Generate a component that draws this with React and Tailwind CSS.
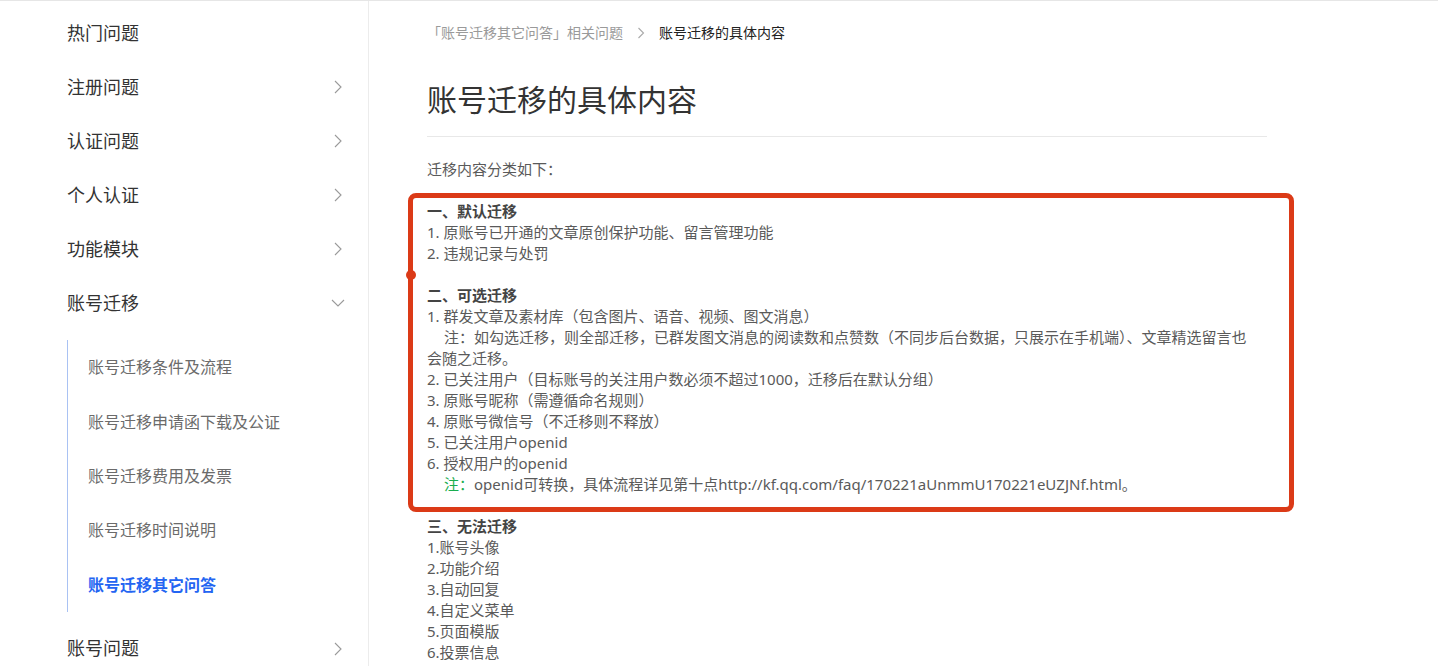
import React from "react";

const FONT = { fontFamily: '"Noto Sans", "Noto Sans CJK SC", sans-serif' };

function ChevronRight() {
  return (
    <svg width="14" height="14" viewBox="0 0 14 14" fill="none">
      <polyline points="4,1 10,7 4,13" stroke="#9a9a9a" strokeWidth="1.1" />
    </svg>
  );
}

function ChevronDown() {
  return (
    <svg width="14" height="14" viewBox="0 0 14 14" fill="none">
      <polyline points="1,4 7,10 13,4" stroke="#9a9a9a" strokeWidth="1.1" />
    </svg>
  );
}

function NavItem({ label, icon }) {
  return (
    <div className="h-[54px] flex items-center justify-between pl-[67px] pr-[23px] text-[18px] text-[#333]">
      <span>{label}</span>
      {icon === "right" && <ChevronRight />}
      {icon === "down" && <ChevronDown />}
    </div>
  );
}

const subItems = [
  "账号迁移条件及流程",
  "账号迁移申请函下载及公证",
  "账号迁移费用及发票",
  "账号迁移时间说明",
  "账号迁移其它问答",
];

function Line({ children, className = "" }) {
  return <div className={"leading-[21px] min-h-[21px] " + className}>{children}</div>;
}

function Indent() {
  return <span className="inline-block w-[17px]" />;
}

export default function App() {
  return (
    <div
      className="w-[1438px] h-[666px] overflow-hidden bg-white border-t border-[#e6e6e6] flex"
      style={FONT}
    >
      <aside className="w-[369px] shrink-0 border-r border-[#ececec] pt-[5px]">
        <NavItem label="热门问题" />
        <NavItem label="注册问题" icon="right" />
        <NavItem label="认证问题" icon="right" />
        <NavItem label="个人认证" icon="right" />
        <NavItem label="功能模块" icon="right" />
        <NavItem label="账号迁移" icon="down" />
        <div className="ml-[67px] mt-[10px] mb-[10px] border-l border-[#a9c2f3]">
          {subItems.map((s, i) => (
            <div
              key={s}
              className={
                "h-[54.4px] flex items-center pl-[20px] text-[16px] " +
                (i === subItems.length - 1 ? "text-[#2465f2] font-bold" : "text-[#6b6b6b]")
              }
            >
              {s}
            </div>
          ))}
        </div>
        <NavItem label="账号问题" icon="right" />
      </aside>

      <main className="flex-1 pl-[58px] pt-[21px]">
        <div className="w-[840px]">
          <div className="flex items-center text-[14px] leading-[21px]">
            <span className="text-[#9a9a9a]">「账号迁移其它问答」相关问题</span>
            <span className="mx-[14px] flex items-center">
              <svg width="8" height="12" viewBox="0 0 8 12" fill="none">
                <polyline points="1.5,1 6.5,6 1.5,11" stroke="#aaa" strokeWidth="1.1" />
              </svg>
            </span>
            <span className="text-[#222]">账号迁移的具体内容</span>
          </div>

          <h1 className="mt-[37px] text-[30px] leading-[40px] text-[#333] font-normal pb-[16px] border-b border-[#e8e8e8]">
            账号迁移的具体内容
          </h1>

          <div className="mt-[21.5px] text-[15px] text-[#5a5a5a]">
            <Line>迁移内容分类如下：</Line>
            <Line />
            <div className="relative">
              <Line className="font-bold text-[#444]">一、默认迁移</Line>
              <Line>1. 原账号已开通的文章原创保护功能、留言管理功能</Line>
              <Line>2. 违规记录与处罚</Line>
              <Line />
              <Line className="font-bold text-[#444]">二、可选迁移</Line>
              <Line>1. 群发文章及素材库（包含图片、语音、视频、图文消息）</Line>
              <Line className="max-w-[830px]">
                <Indent />
                注：如勾选迁移，则全部迁移，已群发图文消息的阅读数和点赞数（不同步后台数据，只展示在手机端）、文章精选留言也会随之迁移。
              </Line>
              <Line>2. 已关注用户（目标账号的关注用户数必须不超过1000，迁移后在默认分组）</Line>
              <Line>3. 原账号昵称（需遵循命名规则）</Line>
              <Line>4. 原账号微信号（不迁移则不释放）</Line>
              <Line>5. 已关注用户openid</Line>
              <Line>6. 授权用户的openid</Line>
              <Line>
                <Indent />
                <span className="text-[#1aad4f]">注：</span>
                openid可转换，具体流程详见第十点http://kf.qq.com/faq/170221aUnmmU170221eUZJNf.html。
              </Line>
              <Line />
              <div className="pointer-events-none absolute top-[-7.5px] bottom-[3.5px] left-[-19px] right-[-27px] border-[5px] border-[#db3a17] rounded-[8px]" />
              <div className="pointer-events-none absolute left-[-21px] top-[69.5px] w-[10px] h-[10px] rounded-full bg-[#db3a17]" />
            </div>
            <Line className="font-bold text-[#444]">三、无法迁移</Line>
            <Line>1.账号头像</Line>
            <Line>2.功能介绍</Line>
            <Line>3.自动回复</Line>
            <Line>4.自定义菜单</Line>
            <Line>5.页面模版</Line>
            <Line>6.投票信息</Line>
          </div>
        </div>
      </main>
    </div>
  );
}
